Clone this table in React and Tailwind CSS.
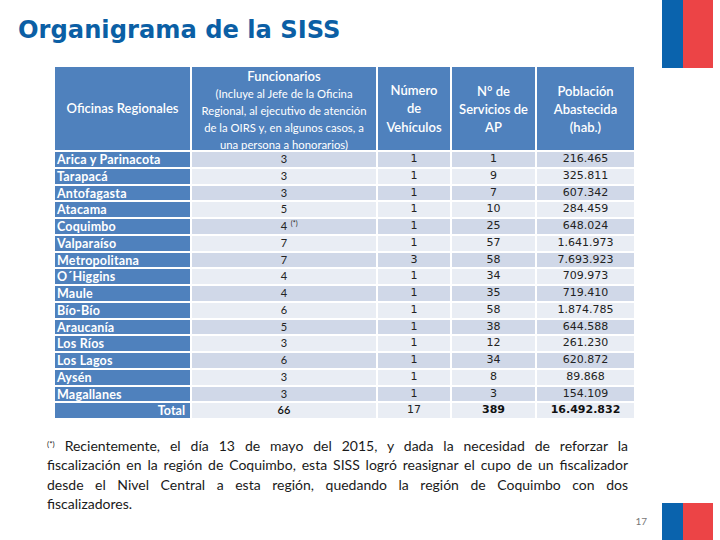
import React from 'react';

const rows = [
  { region: 'Arica y Parinacota', func: '3', veh: '1', ap: '1', pob: '216.465' },
  { region: 'Tarapacá', func: '3', veh: '1', ap: '9', pob: '325.811' },
  { region: 'Antofagasta', func: '3', veh: '1', ap: '7', pob: '607.342' },
  { region: 'Atacama', func: '5', veh: '1', ap: '10', pob: '284.459' },
  { region: 'Coquimbo', func: '4', note: true, veh: '1', ap: '25', pob: '648.024' },
  { region: 'Valparaíso', func: '7', veh: '1', ap: '57', pob: '1.641.973' },
  { region: 'Metropolitana', func: '7', veh: '3', ap: '58', pob: '7.693.923' },
  { region: 'O´Higgins', func: '4', veh: '1', ap: '34', pob: '709.973' },
  { region: 'Maule', func: '4', veh: '1', ap: '35', pob: '719.410' },
  { region: 'Bío-Bío', func: '6', veh: '1', ap: '58', pob: '1.874.785' },
  { region: 'Araucanía', func: '5', veh: '1', ap: '38', pob: '644.588' },
  { region: 'Los Ríos', func: '3', veh: '1', ap: '12', pob: '261.230' },
  { region: 'Los Lagos', func: '6', veh: '1', ap: '34', pob: '620.872' },
  { region: 'Aysén', func: '3', veh: '1', ap: '8', pob: '89.868' },
  { region: 'Magallanes', func: '3', veh: '1', ap: '3', pob: '154.109' },
];

const Flag = ({ h }) => (
  <div className={`flex w-[51px] ${h}`}>
    <div className="w-[21px] bg-[#0a63ad]" />
    <div className="flex-1 bg-[#ec4446]" />
  </div>
);

const lato = { fontFamily: 'Lato, "Open Sans", sans-serif' };
const dejavu = { fontFamily: '"DejaVu Sans", Verdana, sans-serif' };

const App = () => {
  return (
    <div className="w-[720px] h-[540px] bg-white overflow-hidden flex flex-col" style={lato}>
      {/* top bar */}
      <div className="flex h-[67px] shrink-0">
        <h1 className="pl-[18px] pt-[15px] text-[24.2px] leading-[30px] font-bold text-[#0b5fa5]" style={dejavu}>
          Organigrama de la SISS
        </h1>
        <div className="ml-auto mr-[7px] flex">
          <Flag h="h-[68px]" />
        </div>
      </div>

      {/* table */}
      <div className="ml-[55px] grid grid-cols-[135px_184px_72px_83px_97px] grid-rows-[83px] auto-rows-[14.75px] gap-[2px] text-white">
        <div className="bg-[#4f81bd] flex items-center justify-center text-[13px] font-semibold">
          Oficinas Regionales
        </div>
        <div className="bg-[#4f81bd] flex flex-col items-center pt-[1px] text-center overflow-hidden">
          <div className="text-[13px] font-semibold leading-[17px]">Funcionarios</div>
          <div className="text-[11.3px] leading-[17px] whitespace-nowrap">
            (Incluye al Jefe de la Oficina
            <br />
            Regional, al ejecutivo de atención
            <br />
            de la OIRS y, en algunos casos, a
            <br />
            una persona a honorarios)
          </div>
        </div>
        <div className="bg-[#4f81bd] flex items-center justify-center text-center text-[13px] font-semibold leading-[18.5px]">
          Número
          <br />
          de
          <br />
          Vehículos
        </div>
        <div className="bg-[#4f81bd] flex items-center justify-center text-center text-[13px] font-semibold leading-[18px]">
          N° de
          <br />
          Servicios de
          <br />
          AP
        </div>
        <div className="bg-[#4f81bd] flex items-center justify-center text-center text-[13px] font-semibold leading-[18px]">
          Población
          <br />
          Abastecida
          <br />
          (hab.)
        </div>

        {rows.map((r, i) => {
          const band = i % 2 === 0 ? 'bg-[#d0d8e8]' : 'bg-[#e9edf4]';
          const num = `${band} flex justify-center text-[#222] text-[11px] leading-[13px]`;
          return (
            <React.Fragment key={r.region}>
              <div className="bg-[#4f81bd] pl-[2px] text-[12.5px] font-bold leading-[15px] tracking-[0.2px] whitespace-nowrap">
                {r.region}
              </div>
              <div className={num}>
                <span className="relative">
                  {r.func}
                  {r.note && <span className="absolute left-[10px] -top-[2px] text-[7px]">(*)</span>}
                </span>
              </div>
              <div className={num} style={dejavu}>{r.veh}</div>
              <div className={num} style={dejavu}>{r.ap}</div>
              <div className={num} style={dejavu}>{r.pob}</div>
            </React.Fragment>
          );
        })}

        <div className="bg-[#4f81bd] pr-[5px] text-right text-[12.5px] font-bold leading-[15px]">Total</div>
        <div className="bg-[#e9edf4] flex justify-center text-[#111] text-[11px] leading-[13px] font-semibold">66</div>
        <div className="bg-[#e9edf4] flex justify-center text-[#222] text-[11px] leading-[13px]" style={dejavu}>17</div>
        <div className="bg-[#e9edf4] flex justify-center text-[#111] text-[11px] leading-[13px] font-bold" style={dejavu}>389</div>
        <div className="bg-[#e9edf4] flex justify-center text-[#111] text-[11px] leading-[13px] font-bold" style={dejavu}>16.492.832</div>
      </div>

      {/* footnote + page number */}
      <div className="flex flex-1 mt-[18px]">
        <div className="ml-[47px] w-[581px] text-[14px] leading-[19.3px] text-[#1a1a1a]">
          <p className="text-justify [text-align-last:justify] whitespace-nowrap">
            <sup className="text-[8px]">(*)</sup> Recientemente, el día 13 de mayo del 2015, y dada la necesidad de reforzar la
          </p>
          <p className="text-justify [text-align-last:justify] whitespace-nowrap">
            fiscalización en la región de Coquimbo, esta SISS logró reasignar el cupo de un fiscalizador
          </p>
          <p className="text-justify [text-align-last:justify] whitespace-nowrap">
            desde el Nivel Central a esta región, quedando la región de Coquimbo con dos
          </p>
          <p>fiscalizadores.</p>
        </div>
        <div className="ml-auto mr-[7px] flex items-end">
          <span className="mb-[11px] mr-[15px] text-[10px] text-[#777]">17</span>
          <Flag h="h-[37px]" />
        </div>
      </div>
    </div>
  );
};

export default App;
